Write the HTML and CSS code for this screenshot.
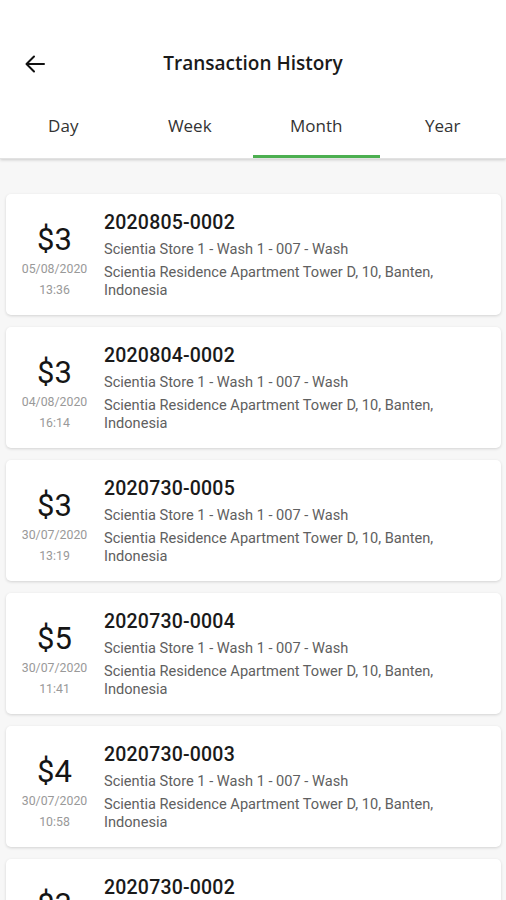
FILE: index.html
```html
<!DOCTYPE html>
<html>
<head>
<meta charset="utf-8">
<link rel="stylesheet" href="styles.css">
</head>
<body>
<div class="app">
  <header class="topbar">
    <div class="titlebar">
      <svg class="back" width="24" height="24" viewBox="0 0 24 24"><path d="M21 12H4M11 4.5L3.5 12l7.5 7.5" fill="none" stroke="#111" stroke-width="2" stroke-linecap="round" stroke-linejoin="round"/></svg>
      <h1 class="title">Transaction History</h1>
    </div>
    <nav class="tabs">
      <div class="tab">Day</div>
      <div class="tab">Week</div>
      <div class="tab active">Month</div>
      <div class="tab">Year</div>
    </nav>
  </header>
  <main class="list">
    <div class="card">
      <div class="left"><div class="amount">$3</div><div class="date first">05/08/2020</div><div class="date">13:36</div></div>
      <div class="right"><div class="code">2020805-0002</div><div class="store">Scientia Store 1 - Wash 1 - 007 - Wash</div><div class="addr">Scientia Residence Apartment Tower D, 10, Banten, Indonesia</div></div>
    </div>
    <div class="card">
      <div class="left"><div class="amount">$3</div><div class="date first">04/08/2020</div><div class="date">16:14</div></div>
      <div class="right"><div class="code">2020804-0002</div><div class="store">Scientia Store 1 - Wash 1 - 007 - Wash</div><div class="addr">Scientia Residence Apartment Tower D, 10, Banten, Indonesia</div></div>
    </div>
    <div class="card">
      <div class="left"><div class="amount">$3</div><div class="date first">30/07/2020</div><div class="date">13:19</div></div>
      <div class="right"><div class="code">2020730-0005</div><div class="store">Scientia Store 1 - Wash 1 - 007 - Wash</div><div class="addr">Scientia Residence Apartment Tower D, 10, Banten, Indonesia</div></div>
    </div>
    <div class="card">
      <div class="left"><div class="amount">$5</div><div class="date first">30/07/2020</div><div class="date">11:41</div></div>
      <div class="right"><div class="code">2020730-0004</div><div class="store">Scientia Store 1 - Wash 1 - 007 - Wash</div><div class="addr">Scientia Residence Apartment Tower D, 10, Banten, Indonesia</div></div>
    </div>
    <div class="card">
      <div class="left"><div class="amount">$4</div><div class="date first">30/07/2020</div><div class="date">10:58</div></div>
      <div class="right"><div class="code">2020730-0003</div><div class="store">Scientia Store 1 - Wash 1 - 007 - Wash</div><div class="addr">Scientia Residence Apartment Tower D, 10, Banten, Indonesia</div></div>
    </div>
    <div class="card">
      <div class="left"><div class="amount">$3</div><div class="date first">30/07/2020</div><div class="date">10:20</div></div>
      <div class="right"><div class="code">2020730-0002</div><div class="store">Scientia Store 1 - Wash 1 - 007 - Wash</div><div class="addr">Scientia Residence Apartment Tower D, 10, Banten, Indonesia</div></div>
    </div>
  </main>
</div>
</body>
</html>
```
FILE: styles.css
```css
* { box-sizing: border-box; margin: 0; padding: 0; }
html, body { width: 506px; height: 900px; overflow: hidden; }
body { background: #f7f7f7; font-family: Roboto, "Liberation Sans", sans-serif; color: #222; }
.app { display: flex; flex-direction: column; }
.topbar { background: #fff; box-shadow: 0 1px 3px rgba(0,0,0,0.18); border-bottom: 1px solid #e2e2e2; position: relative; z-index: 1; }
.titlebar { height: 98px; padding-top: 40px; display: flex; align-items: flex-start; position: relative; }
.back { position: absolute; left: 23px; top: 52px; }
.title { flex: 1; text-align: center; font-family: "Open Sans", sans-serif; font-weight: 600; font-size: 19px; line-height: 24px; color: #1a1a1a; padding-top: 11px; }
.tabs { display: flex; height: 60px; }
.tab { flex: 1; text-align: center; font-family: "Open Sans", sans-serif; font-size: 17px; line-height: 22px; padding-top: 17px; color: #333; border-bottom: 3px solid transparent; }
.tab.active { border-bottom-color: #4caf50; }
.list { display: flex; flex-direction: column; gap: 12px; padding: 35px 5px 0 6px; }
.card { background: #fff; border-radius: 5px; height: 121px; flex-shrink: 0; display: flex; box-shadow: 0 1px 3px rgba(0,0,0,0.15); }
.left { width: 97px; text-align: center; padding-top: 28px; }
.amount { font-size: 31px; line-height: 36px; color: #151515; }
.date { font-size: 12.3px; line-height: 21px; color: #999; }
.date.first { margin-top: 1px; }
.right { flex: 1; padding: 17px 10px 0 1px; }
.code { font-size: 19.5px; line-height: 24px; font-weight: 500; color: #1a1a1a; letter-spacing: 0.2px; }
.store { font-size: 14.6px; line-height: 20px; color: #606060; margin-top: 4px; }
.addr { font-size: 14.6px; line-height: 18px; color: #606060; margin-top: 4px; }
```
